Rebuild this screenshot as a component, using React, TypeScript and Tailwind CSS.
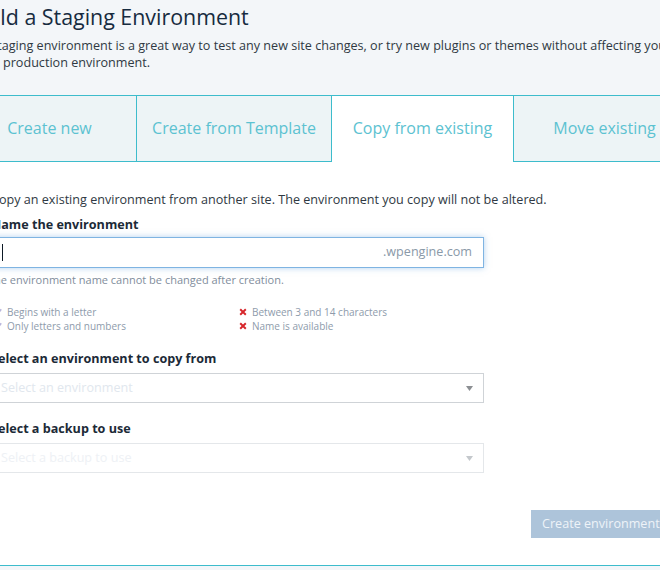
import React from 'react';

const tabs = [
  { label: 'Create new', width: 'w-[174px]', active: false },
  { label: 'Create from Template', width: 'w-[195px]', active: false },
  { label: 'Copy from existing', width: 'w-[182px]', active: true },
  { label: 'Move existing', width: 'w-[182px]', active: false },
];

const Check = () => (
  <svg width="8" height="8" viewBox="0 0 10 10" className="shrink-0">
    <path d="M1 5.5 L4 8.5 L9 1.5" fill="none" stroke="#b9b6dc" strokeWidth="2" />
  </svg>
);

const Cross = () => (
  <svg width="8" height="8" viewBox="0 0 10 10" className="shrink-0">
    <path d="M1.5 1.5 L8.5 8.5 M8.5 1.5 L1.5 8.5" fill="none" stroke="#d7262b" strokeWidth="2.4" />
  </svg>
);

const Caret = ({ light }: { light?: boolean }) => (
  <svg width="7" height="5" viewBox="0 0 7 5">
    <path d="M0 0 L7 0 L3.5 5 Z" fill={light ? '#c4c8cc' : '#8c8f93'} />
  </svg>
);

const App = () => {
  return (
    <div className="w-[660px] h-[570px] overflow-hidden bg-[#f3f6f9] font-['Open_Sans',sans-serif]">
      <div className="h-[95px] pt-[2px]">
        <h1 className="ml-[-32px] text-[21.4px] leading-[30px] text-[#162b40] whitespace-nowrap">
          Build a Staging Environment
        </h1>
        <p className="mt-[5px] text-[12.6px] leading-[17px] text-[#2f3943] whitespace-nowrap">
          <span className="block ml-[-20px]">
            A staging environment is a great way to test any new site changes, or try new plugins or themes without affecting your
          </span>
          <span className="block ml-[3px]">production environment.</span>
        </p>
      </div>

      <div className="bg-white border-t border-b border-[#3dbccc] h-[471px] w-[700px]">
        <div className="flex ml-[-37px] h-[66px]">
          {tabs.map((t) => (
            <div
              key={t.label}
              className={
                t.active
                  ? `${t.width} shrink-0 flex items-center justify-center pb-[3px] bg-white border-r border-[#3dbccc] text-[16px] text-[#5cc2d1]`
                  : `${t.width} shrink-0 flex items-center justify-center pb-[1px] bg-[#edf4f6] border-r border-b border-[#3dbccc] text-[16px] text-[#5cc2d1]`
              }
            >
              {t.label}
            </div>
          ))}
        </div>

        <div className="ml-[-9px] w-[493px] pt-[29px]">
          <p className="text-[12.6px] leading-[18px] text-[#2f3943] whitespace-nowrap">
            Copy an existing environment from another site. The environment you copy will not be altered.
          </p>

          <label className="block mt-[7px] text-[12.6px] leading-[18px] font-bold text-[#1c2a37]">
            Name the environment
          </label>
          <div className="mt-[3px] h-[31px] flex items-center justify-between border border-[#7fb4e2] shadow-[0_0_6px_rgba(102,163,224,0.5)] pl-[10px] pr-[11px]">
            <span className="w-[1px] h-[17px] bg-[#0d1a26]" />
            <span className="text-[12.6px] text-[#8a99a8]">.wpengine.com</span>
          </div>
          <p className="mt-[4px] text-[11px] leading-[15px] text-[#7f8d9c] ml-[-3px]">
            The environment name cannot be changed after creation.
          </p>

          <div className="mt-[18px] ml-[3px] grid grid-cols-2 text-[10px] leading-[14px] text-[#8e9bab]">
            <div className="flex items-center gap-[5px]">
              <Check />
              <span>Begins with a letter</span>
            </div>
            <div className="flex items-center gap-[5px]">
              <Cross />
              <span>Between 3 and 14 characters</span>
            </div>
            <div className="flex items-center gap-[5px]">
              <Check />
              <span>Only letters and numbers</span>
            </div>
            <div className="flex items-center gap-[5px]">
              <Cross />
              <span>Name is available</span>
            </div>
          </div>

          <label className="block mt-[17px] text-[12.6px] leading-[18px] font-bold text-[#1c2a37]">
            Select an environment to copy from
          </label>
          <div className="mt-[5px] h-[30px] flex items-center justify-between border border-[#cfd3d7] pl-[9px] pr-[10px]">
            <span className="text-[12.6px] text-[#e1e7ee]">Select an environment</span>
            <Caret />
          </div>

          <label className="block mt-[17px] text-[12.6px] leading-[18px] font-bold text-[#1c2a37]">
            Select a backup to use
          </label>
          <div className="mt-[5px] h-[30px] flex items-center justify-between border border-[#e4e7ea] pl-[9px] pr-[10px]">
            <span className="text-[12.6px] text-[#eef1f5]">Select a backup to use</span>
            <Caret light />
          </div>
        </div>

        <div className="flex ml-[531px] mt-[37px]">
          <button className="h-[28px] px-[11px] bg-[#adc4da] text-[12.6px] text-[#eef3f8] whitespace-nowrap">
            Create environment
          </button>
        </div>
      </div>
    </div>
  );
};

export default App;
